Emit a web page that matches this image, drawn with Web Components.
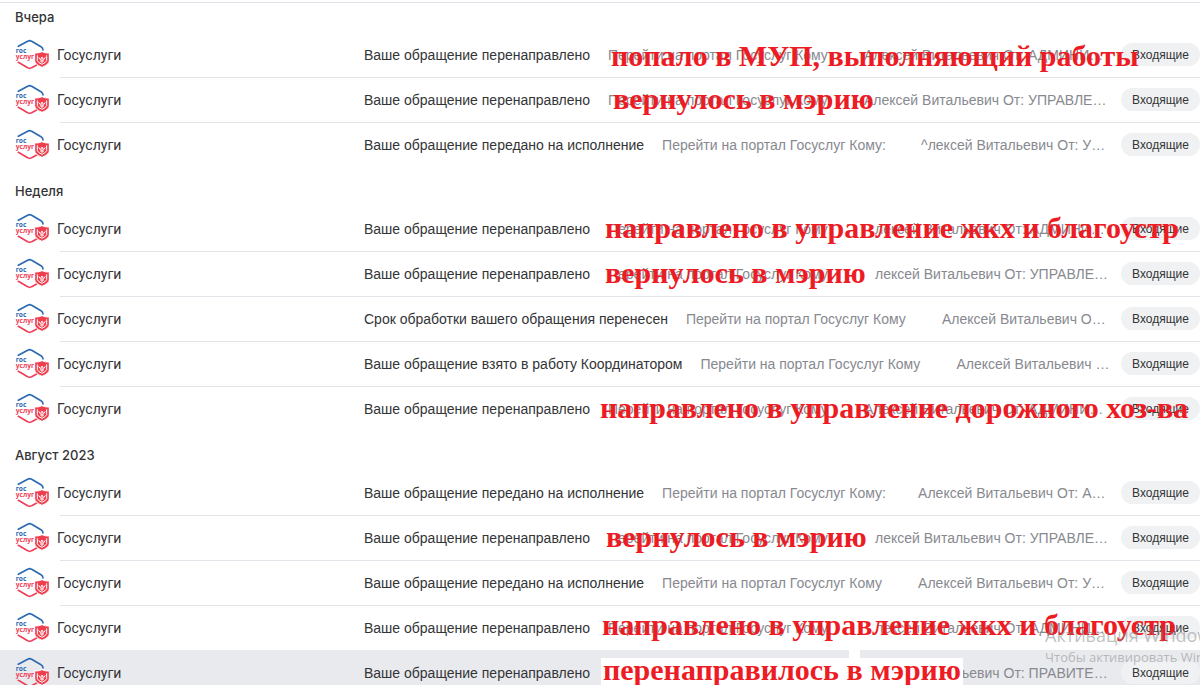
<!DOCTYPE html>
<html lang="ru">
<head>
<meta charset="utf-8">
<title>Входящие</title>
<style>
  body {
    margin: 0;
    background: #fff;
    color: #333436;
    font: 14px/20px "Liberation Sans", Arial, sans-serif;
  }
</style>
</head>
<body>
<mail-list></mail-list>

<script>
const GROUPS = [
  {
    title: 'Вчера',
    items: [
      { subject: 'Ваше обращение перенаправлено', snippet: 'Перейти на портал Госуслуг Кому', name: 'Алексей Витальевич От: АДМИНИ…', note: 'попало в МУП, выполняющий работы', x: 611, y: 8 },
      { subject: 'Ваше обращение перенаправлено', snippet: 'Перейти на портал Госуслуг Кому', name: 'Алексей Витальевич От: УПРАВЛЕ…', note: 'вернулось в мэрию', x: 613 },
      { subject: 'Ваше обращение передано на исполнение', snippet: 'Перейти на портал Госуслуг Кому:', name: '^лексей Витальевич От: У…', cut: 'short' }
    ]
  },
  {
    title: 'Неделя',
    items: [
      { subject: 'Ваше обращение перенаправлено', snippet: 'Перейти на портал Госуслуг Кому', name: 'лексей Витальевич От: АДМИНИ…', cut: 'letter', note: 'направлено в управление жкх и благоустр', x: 605 },
      { subject: 'Ваше обращение перенаправлено', snippet: 'Перейти на портал Госуслуг Кому', name: 'лексей Витальевич От: УПРАВЛЕ…', cut: 'letter', note: 'вернулось в мэрию', x: 605 },
      { subject: 'Срок обработки вашего обращения перенесен', snippet: 'Перейти на портал Госуслуг Кому', name: 'Алексей Витальевич О…' },
      { subject: 'Ваше обращение взято в работу Координатором', snippet: 'Перейти на портал Госуслуг Кому', name: 'Алексей Витальевич …' },
      { subject: 'Ваше обращение перенаправлено', snippet: 'Перейти на портал Госуслуг Кому', name: 'Алексей Витальевич От: АДМИНИ…', note: 'направлено в управление дорожного хоз-ва', x: 600 }
    ]
  },
  {
    title: 'Август 2023',
    items: [
      { subject: 'Ваше обращение передано на исполнение', snippet: 'Перейти на портал Госуслуг Кому:', name: 'Алексей Витальевич От: А…' },
      { subject: 'Ваше обращение перенаправлено', snippet: 'Перейти на портал Госуслуг Кому', name: 'лексей Витальевич От: УПРАВЛЕ…', cut: 'letter', note: 'вернулось в мэрию', x: 606 },
      { subject: 'Ваше обращение передано на исполнение', snippet: 'Перейти на портал Госуслуг Кому', name: 'Алексей Витальевич От: У…' },
      { subject: 'Ваше обращение перенаправлено', snippet: 'Перейти на портал Госуслуг Кому', name: 'лексей Витальевич От: АДМИНИ…', cut: 'letter', note: 'направлено в управление жкх и благоустр', x: 602, y: 4 },
      { subject: 'Ваше обращение перенаправлено', snippet: '', name: 'ьевич От: ПРАВИТЕ…', cut: 'long', note: 'перенаправилось в мэрию', x: 601, y: 8, boxed: true }
    ]
  }
];

class SenderLogo extends HTMLElement {
  constructor() {
    super();
    this.attachShadow({ mode: 'open' });
    this.shadowRoot.innerHTML = `
      <style>
        :host { display: block; width: 34px; height: 31px; }
        svg { display: block; }
        text { font: bold 20px "Open Sans", sans-serif; }
      </style>
      <svg width="34" height="31" viewBox="-2 0 102 93" aria-hidden="true">
        <g fill="none" stroke-width="5" stroke-linecap="round" stroke-linejoin="round">
          <path stroke="#2a6ab0" d="M8 22 36 7q6-4 12 0l28 16q6 4 6 10"/>
          <path stroke="#ee3f58" d="M8 70 36 86q6 4 12 0l15-8"/>
        </g>
        <text x="0" y="42" fill="#2a6ab0">гос</text>
        <text x="0" y="59" fill="#ee3f58">услуг</text>
        <path fill="#ee3f4f" stroke="#fff" stroke-width="3" d="M79 38q11 5 22 4v23q0 11-22 20-22-9-22-20V42q11 1 22-4z"/>
        <path fill="none" stroke="#fff" stroke-width="3" d="M65 49v16q2 6 14 11 12-5 14-11V49M69 55l5 7 5-8 5 8 5-7M79 58v14M73 66h12"/>
      </svg>
    `;
  }
}
customElements.define('sender-logo', SenderLogo);

class FolderChip extends HTMLElement {
  constructor() {
    super();
    this.attachShadow({ mode: 'open' });
    this.shadowRoot.innerHTML = `
      <style>
        :host { display: block; }
        button {
          display: block;
          height: 23px;
          padding: 0 11px;
          border: 0;
          border-radius: 12px;
          background: #f0f1f3;
          color: #333436;
          font: 12px/22px "Liberation Sans", Arial, sans-serif;
          white-space: nowrap;
          cursor: pointer;
        }
      </style>
      <button type="button"><slot></slot></button>
    `;
  }
}
customElements.define('folder-chip', FolderChip);

class RedNote extends HTMLElement {
  constructor() {
    super();
    this.attachShadow({ mode: 'open' });
    this.shadowRoot.innerHTML = `
      <style>
        :host {
          display: block;
          color: #ed1c24;
          font: bold 30px/32px "Liberation Serif", "Times New Roman", serif;
          white-space: nowrap;
          pointer-events: none;
        }
        :host([boxed]) {
          padding: 0 2px 8px;
          background: #fff;
          line-height: 24px;
        }
        /* eraser mark above the box */
        :host([boxed])::before {
          content: "";
          position: absolute;
          left: 248px;
          bottom: 100%;
          width: 11px;
          height: 8px;
          background: #fff;
        }
      </style>
      <slot></slot>
    `;
  }
}
customElements.define('red-note', RedNote);

class MailRow extends HTMLElement {
  constructor() {
    super();
    this.attachShadow({ mode: 'open' });
  }

  set item(item) {
    this._item = item;
    this.render();
  }

  render() {
    const { subject, snippet, name, cut, note, x, y = 6, boxed } = this._item;
    this.shadowRoot.innerHTML = `
      <style>
        :host {
          display: grid;
          grid-template-columns: 34px 299px minmax(0, 1fr) auto;
          column-gap: 8px;
          align-items: center;
          position: relative;
          height: 45px;
          padding-left: 15px;
        }
        :host([divided]) {
          background: linear-gradient(#e3e4e9, #e3e4e9) 60px 0 / 100% 1px no-repeat;
        }
        :host([active]) { background: #e9eaee; }
        .sender { font-family: Roboto, sans-serif; }
        .text {
          display: flex;
          gap: 18px;
          overflow: hidden;
          white-space: nowrap;
        }
        .snippet { display: flex; color: #87898f; }
        .link { min-width: 256px; }
        .short { padding-left: 3px; }
        .letter { padding-left: 11px; }
        .long { padding-left: 98px; }
        red-note { position: absolute; left: ${x || 0}px; top: ${y}px; }
      </style>
      <sender-logo></sender-logo>
      <span class="sender">Госуслуги</span>
      <div class="text">
        <span>${subject}</span>
        <span class="snippet">
          <span class="link">${snippet}</span>
          <span class="${cut || ''}">${name}</span>
        </span>
      </div>
      <folder-chip>Входящие</folder-chip>
      ${note ? `<red-note ${boxed ? 'boxed' : ''}>${note}</red-note>` : ''}
    `;
  }
}
customElements.define('mail-row', MailRow);

class MailGroup extends HTMLElement {
  constructor() {
    super();
    this.attachShadow({ mode: 'open' });
    this.shadowRoot.innerHTML = `
      <style>
        :host { display: block; }
        h2 {
          margin: 0;
          padding: 14px 15px 5px;
          font: 500 13px/20px Inter, sans-serif;
        }
        :host(:first-of-type) h2 { padding-top: 4px; }
      </style>
      <h2></h2>
      <div class="rows"></div>
    `;
  }

  set group(group) {
    this.shadowRoot.querySelector('h2').textContent = group.title;
    const rows = this.shadowRoot.querySelector('.rows');
    group.items.forEach((item, i) => {
      const row = document.createElement('mail-row');
      row.toggleAttribute('divided', i > 0);
      row.toggleAttribute('active', Boolean(item.boxed));
      row.item = item;
      rows.append(row);
    });
  }
}
customElements.define('mail-group', MailGroup);

class SystemWatermark extends HTMLElement {
  constructor() {
    super();
    this.attachShadow({ mode: 'open' });
    this.shadowRoot.innerHTML = `
      <style>
        :host {
          display: block;
          width: 155px;
          overflow: hidden;
          color: rgba(130, 130, 130, 0.5);
          font: 13px/18px "Open Sans", sans-serif;
          white-space: nowrap;
          pointer-events: none;
        }
        .title { font-size: 18px; line-height: 26px; }
      </style>
      <div class="title">Активация Windows</div>
      <div>Чтобы активировать Windows</div>
    `;
  }
}
customElements.define('system-watermark', SystemWatermark);

class MailList extends HTMLElement {
  constructor() {
    super();
    this.attachShadow({ mode: 'open' });
    this.shadowRoot.innerHTML = `
      <style>
        :host {
          display: block;
          box-sizing: border-box;
          position: relative;
          height: 100vh;
          padding-top: 2px;
          overflow: hidden;
        }
        main { border-top: 1px solid #e1e2ea; }
        system-watermark { position: absolute; right: 0; bottom: 19px; }
      </style>
      <main></main>
      <system-watermark></system-watermark>
    `;
    const main = this.shadowRoot.querySelector('main');
    GROUPS.forEach((group) => {
      const el = document.createElement('mail-group');
      el.group = group;
      main.append(el);
    });
  }
}
customElements.define('mail-list', MailList);
</script>
</body>
</html>
